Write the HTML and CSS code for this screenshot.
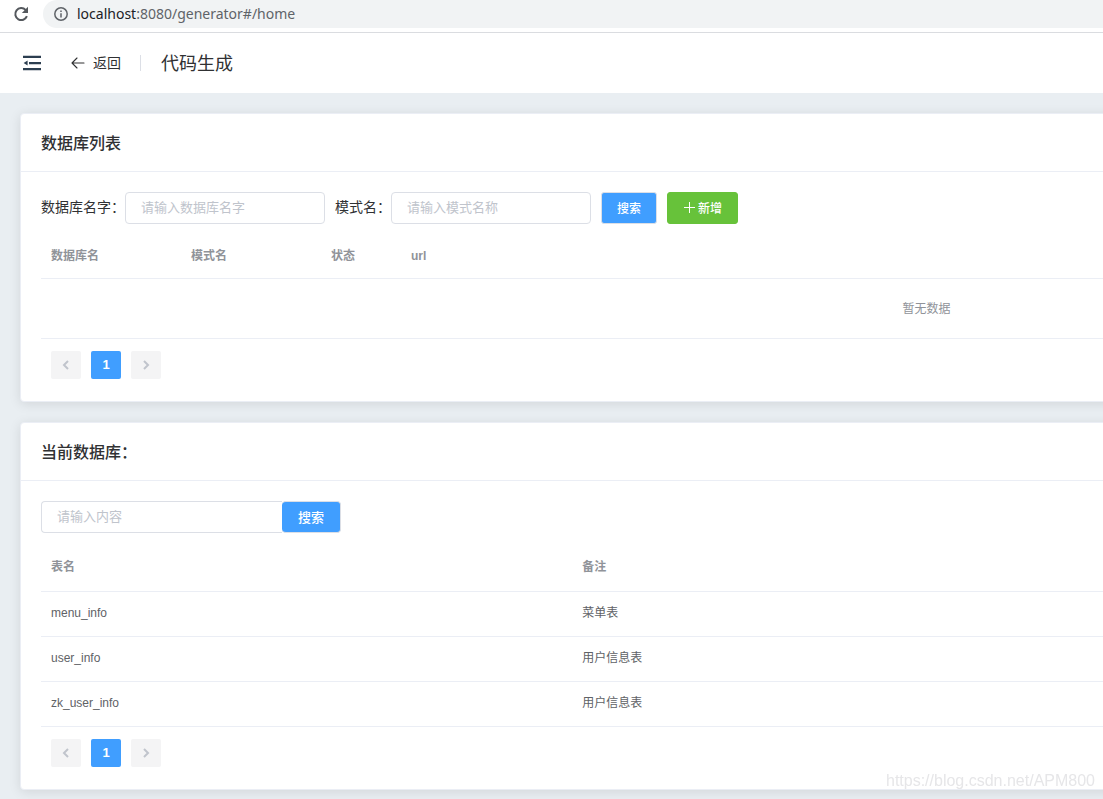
FILE: index.html
```html
<!DOCTYPE html>
<html lang="zh-CN">
<head>
<meta charset="utf-8">
<title>代码生成</title>
<link rel="stylesheet" href="styles.css">
</head>
<body>
<div class="browser-bar">
  <button class="icon-button" type="button" aria-label="刷新">
    <svg width="16" height="16" viewBox="0 0 16 16" fill="none" stroke="#54585d" stroke-width="2"><path d="M13.9 10.2A6 6 0 1 1 12.6 3.9L13.6 5"/><path d="M15 .8v6.2H8.8z" fill="#54585d" stroke="none"/></svg>
  </button>
  <div class="address">
    <svg width="14" height="14" viewBox="0 0 14 14" fill="none" stroke="#5f6368" stroke-width="1.5"><circle cx="7" cy="7" r="6.2"/><path d="M7 6.2v4.3M7 3.5v1.6"/></svg>
    <span class="url"><span class="host">localhost</span>:8080/generator#/home</span>
  </div>
</div>
<header class="page-header">
  <button class="icon-button fold" type="button" aria-label="收起菜单">
    <svg width="18" height="16" viewBox="0 0 18 16" fill="#2c3e50"><path d="M0 .7h18v2.3H0zM6 7h12v2.2H6zM0 13h18v2.3H0zM4.6 5.4v5.2L.6 8z"/></svg>
  </button>
  <button class="back" type="button">
    <svg width="14" height="12" viewBox="0 0 14 12" fill="none" stroke="#303133" stroke-width="1.1" stroke-linecap="round" stroke-linejoin="round"><path d="M6 1L1 6l5 5M1 6h12"/></svg>
    <span>返回</span>
  </button>
  <h1 class="page-title">代码生成</h1>
</header>
<main class="viewport">
  <div class="content">
    <section class="card">
      <h2 class="card-header">数据库列表</h2>
      <div class="card-body">
        <form class="filters">
          <label for="db-name">数据库名字：</label>
          <input id="db-name" class="input" type="text" placeholder="请输入数据库名字">
          <label for="schema-name">模式名：</label>
          <input id="schema-name" class="input" type="text" placeholder="请输入模式名称">
          <button class="button primary" type="button">搜索</button>
          <button class="button success" type="button">
            <svg width="12" height="12" viewBox="0 0 12 12" fill="none" stroke="#fff"><path d="M6.5 1v11M1 6.5h11"/></svg>
            <span>新增</span>
          </button>
        </form>
        <table class="table databases">
          <thead><tr><th class="name">数据库名</th><th class="name">模式名</th><th class="state">状态</th><th>url</th></tr></thead>
          <tbody><tr><td class="empty" colspan="4">暂无数据</td></tr></tbody>
        </table>
        <nav class="pagination" aria-label="数据库分页">
          <button type="button" disabled aria-label="上一页"><svg width="8" height="10" viewBox="0 0 8 10"><path d="M6 1L2 5l4 4"/></svg></button>
          <button type="button" class="current">1</button>
          <button type="button" disabled aria-label="下一页"><svg width="8" height="10" viewBox="0 0 8 10"><path d="M2 1l4 4-4 4"/></svg></button>
        </nav>
      </div>
    </section>
    <section class="card">
      <h2 class="card-header">当前数据库：</h2>
      <div class="card-body">
        <form class="search">
          <input class="input" type="text" placeholder="请输入内容" aria-label="表名搜索">
          <button class="button" type="button">搜索</button>
        </form>
        <table class="table tables">
          <thead><tr><th class="table-name">表名</th><th>备注</th></tr></thead>
          <tbody>
            <tr><td>menu_info</td><td>菜单表</td></tr>
            <tr><td>user_info</td><td>用户信息表</td></tr>
            <tr><td>zk_user_info</td><td>用户信息表</td></tr>
          </tbody>
        </table>
        <nav class="pagination" aria-label="数据表分页">
          <button type="button" disabled aria-label="上一页"><svg width="8" height="10" viewBox="0 0 8 10"><path d="M6 1L2 5l4 4"/></svg></button>
          <button type="button" class="current">1</button>
          <button type="button" disabled aria-label="下一页"><svg width="8" height="10" viewBox="0 0 8 10"><path d="M2 1l4 4-4 4"/></svg></button>
        </nav>
      </div>
    </section>
  </div>
</main>
<div class="watermark">https://blog.csdn.net/APM800</div>
</body>
</html>
```
FILE: styles.css
```css
* {
  box-sizing: border-box;
}

body {
  margin: 0;
  background: #e9eef2;
  color: #303133;
  font-family: "Liberation Sans", "Noto Sans CJK SC", sans-serif;
  font-size: 14px;
}

button,
input {
  margin: 0;
  font-family: inherit;
}

button {
  padding: 0;
  border: 0;
  background: none;
  cursor: pointer;
}

svg {
  display: block;
  flex: none;
}

h1,
h2 {
  margin: 0;
}

.browser-bar {
  display: flex;
  gap: 14px;
  height: 33px;
  padding-left: 13px;
  border-bottom: 1px solid #dadce0;
  background: #fff;
}

.icon-button {
  align-self: flex-start;
  padding-top: 6px;
}

.address {
  display: flex;
  flex: 1;
  align-items: center;
  gap: 9px;
  height: 28px;
  padding-left: 11px;
  border-radius: 14px 0 0 14px;
  background: #f1f3f4;
}

.url {
  color: #5f6368;
  font-family: "Noto Sans", sans-serif;
  font-size: 14px;
  line-height: 28px;
}

.host {
  color: #202124;
}

.page-header {
  display: flex;
  align-items: center;
  height: 60px;
  padding-left: 23px;
  background: #fff;
}

.fold {
  align-self: center;
  padding: 0;
}

.back {
  display: flex;
  align-items: center;
  gap: 8px;
  margin-left: 30px;
  color: #303133;
  font-size: 14px;
  line-height: 16px;
}

.page-title {
  margin-left: 19px;
  padding: 2px 0 0 21px;
  background: linear-gradient(#dcdfe6, #dcdfe6) left center / 1px 16px no-repeat;
  font-size: 18px;
  font-weight: 400;
  line-height: 24px;
}

.viewport {
  overflow: hidden;
}

/* Wide tables keep their room; the window shows the left part. */
.content {
  display: flex;
  flex-direction: column;
  gap: 20px;
  min-width: 1853px;
  padding: 20px 20px 9px;
}

.card {
  border: 1px solid #ebeef5;
  border-radius: 4px;
  background: #fff;
  box-shadow: 0 2px 12px 0 rgba(0, 0, 0, 0.1);
}

.card-header {
  padding: 19px 20px 16px;
  border-bottom: 1px solid #ebeef5;
  font-size: 16px;
  font-weight: 500;
  line-height: 22px;
}

.card-body {
  padding: 20px;
}

.filters {
  display: flex;
  align-items: center;
  gap: 10px;
}

.filters label {
  margin-right: -10px;
  padding-bottom: 2px;
  line-height: 30px;
  white-space: nowrap;
}

.input {
  width: 200px;
  height: 32px;
  padding: 0 15px 2px;
  border: 1px solid #dcdfe6;
  border-radius: 4px;
  background: #fff;
  color: #606266;
  font-size: 13px;
}

.input::placeholder {
  color: #c0c4cc;
}

.button {
  display: flex;
  align-items: center;
  gap: 3px;
  height: 32px;
  padding: 0 15px 2px;
  border: 1px solid #dcdfe6;
  border-radius: 3px;
  background: #409eff;
  color: #fff;
  font-size: 12px;
  font-weight: 500;
}

.success {
  border-color: #67c23a;
  background: #67c23a;
}

.search {
  display: flex;
}

.search .input {
  width: 241px;
  border-right: 0;
  border-radius: 4px 0 0 4px;
}

.search .button {
  padding: 0 16px 2px;
  border-left: 0;
  border-radius: 4px;
  font-size: 13px;
}

.table {
  width: 100%;
  margin-top: 10px;
  border-collapse: separate;
  border-spacing: 0;
  table-layout: fixed;
  color: #606266;
  font-size: 12px;
}

.table th,
.table td {
  height: 45px;
  padding: 0 10px;
  border-bottom: 1px solid #ebeef5;
  line-height: 22px;
  text-align: left;
}

.table th {
  color: #909399;
  font-weight: 700;
}

.tables td {
  padding-bottom: 2px;
}

.name {
  width: 140px;
}

.state {
  width: 80px;
}

.table-name {
  width: 30%;
}

.tables th {
  height: 49px;
}

.table .empty {
  height: 60px;
  color: #909399;
  text-align: center;
}

.pagination {
  display: flex;
  gap: 10px;
  margin-top: 10px;
  padding: 2px 10px;
}

.pagination button {
  display: flex;
  align-items: center;
  justify-content: center;
  width: 30px;
  height: 28px;
  border-radius: 2px;
  background: #f4f4f5;
  color: #fff;
  font-size: 13px;
  font-weight: 700;
}

.pagination .current {
  padding-bottom: 2px;
  background: #409eff;
}

.pagination path {
  fill: none;
  stroke: #c0c4cc;
  stroke-width: 2;
}

.watermark {
  position: fixed;
  right: 8px;
  bottom: 8px;
  color: #e6e6e8;
  font-size: 16px;
  line-height: 20px;
}
```
